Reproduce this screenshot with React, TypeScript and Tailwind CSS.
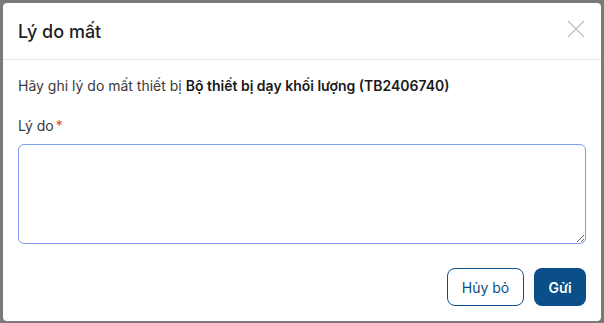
import React from "react";

export default function App() {
  return (
    <div
      className="w-[604px] h-[323px] bg-[#7a7a7a] p-[3px] overflow-hidden"
      style={{ fontFamily: "Inter, 'Noto Sans', sans-serif" }}
    >
      <div className="w-[598px] h-[318px] bg-white rounded-[4px] flex flex-col">
        <div className="h-[57px] flex items-center justify-between pl-[15px] pr-[16px] border-b border-[#e5e5e5]">
          <h2 className="text-[18px] font-medium text-[#1f1f1f]">Lý do mất</h2>
          <svg width="18" height="18" viewBox="0 0 18 18" className="mt-[-4px]">
            <path d="M1 1 L17 17 M17 1 L1 17" stroke="#c4c4c4" strokeWidth="1.4" fill="none" />
          </svg>
        </div>
        <div className="px-[15px] pt-[16px] flex flex-col">
          <p className="text-[14px] leading-[20px] text-[#3a3a3a]">
            Hãy ghi lý do mất thiết bị{" "}
            <span className="font-semibold text-[#1a1a1a]">Bộ thiết bị dạy khối lượng (TB2406740)</span>
          </p>
          <label className="mt-[20px] text-[14px] leading-[20px] text-[#3a3a3a]">
            Lý do<span className="text-[#ef4444] ml-[2px]">*</span>
          </label>
          <textarea className="mt-[8px] h-[100px] w-full rounded-[6px] border border-[#7f9ef0] outline-none resize-y" />
          <div className="mt-[24px] flex justify-end gap-[10px]">
            <button className="h-[38px] w-[77px] rounded-[8px] border border-[#0b4f8a] text-[#0b4f8a] text-[14px] bg-white">
              Hủy bỏ
            </button>
            <button className="h-[38px] w-[52px] rounded-[8px] bg-[#0b4f8a] text-white text-[14px] font-semibold">
              Gửi
            </button>
          </div>
        </div>
      </div>
    </div>
  );
}
